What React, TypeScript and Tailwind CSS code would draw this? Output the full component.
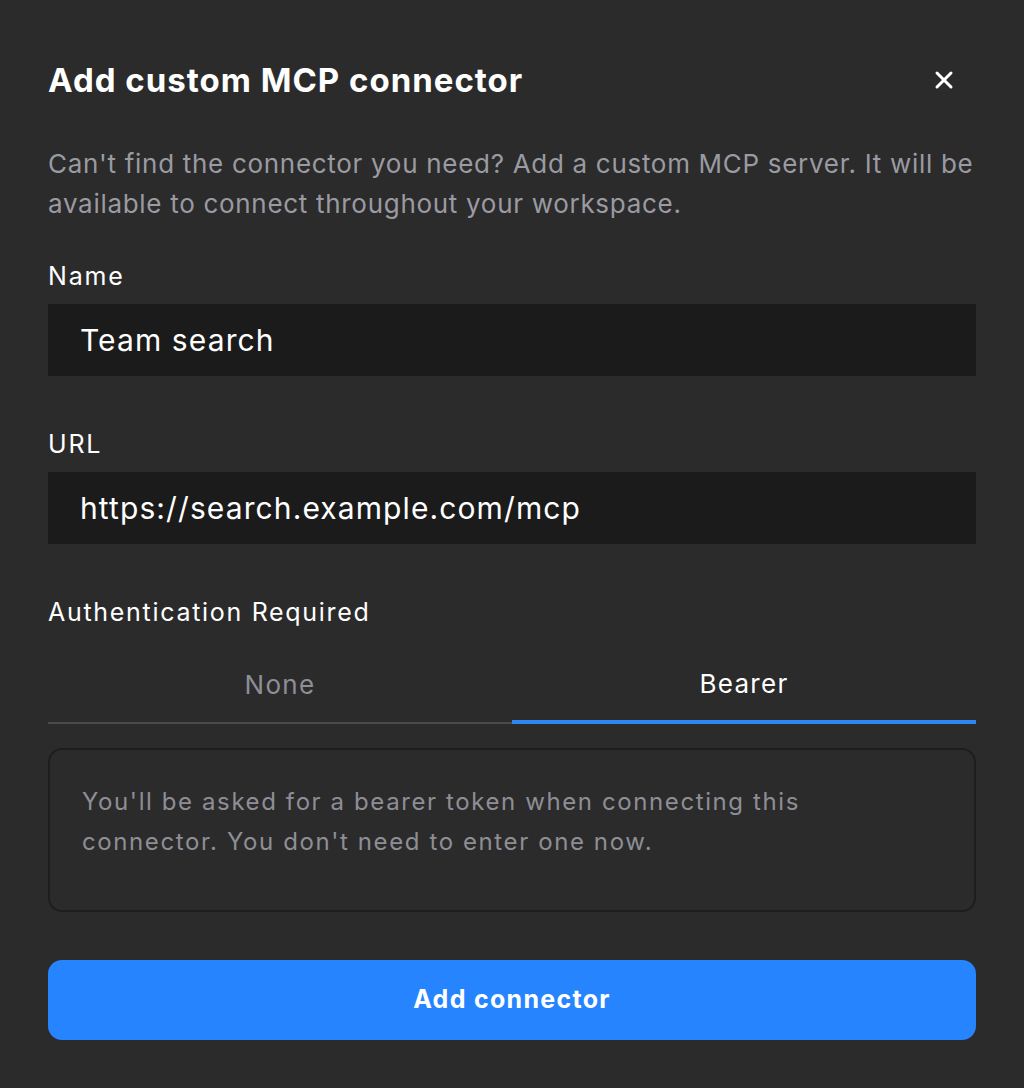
import React, { useState } from 'react';

type AuthMode = 'none' | 'bearer';

const CloseIcon = () => (
  <svg width="20" height="20" viewBox="0 0 20 20" fill="none">
    <path d="M3 3L17 17M17 3L3 17" stroke="white" strokeWidth="3" strokeLinecap="round" />
  </svg>
);

const Field = ({ label, value, first }: { label: string; value: string; first?: boolean }) => (
  <div className={first ? 'mt-[34px]' : 'mt-[50px]'}>
    <label className="block text-[25px] leading-[36px] text-white tracking-[1.8px]">{label}</label>
    <div className="mt-[10px] h-[72px] bg-[#1b1b1b] px-8 flex items-center text-[30px] text-white tracking-[1.1px]">
      {value}
    </div>
  </div>
);

export default function App() {
  const [auth, setAuth] = useState<AuthMode>('bearer');

  const tabClass = (active: boolean) =>
    `h-[58px] pb-[18px] text-[26px] leading-[36px] tracking-[1.3px] ${
      active ? 'text-white border-b-4 border-[#2f86f0]' : 'text-[#8e8e96] border-b-2 border-[#4a4a4a]'
    }`;

  return (
    <div
      className="w-[1024px] h-[1088px] bg-[#2b2b2b] px-12 pt-[56px]"
      style={{ fontFamily: 'Inter, "Noto Sans", sans-serif' }}
    >
      {/* header */}
      <div className="flex items-center justify-between">
        <h1 className="text-[33px] leading-[48px] font-bold text-white tracking-[1px]">
          Add custom MCP connector
        </h1>
        <button className="w-12 h-12 flex items-center justify-center mr-[8px]">
          <CloseIcon />
        </button>
      </div>

      <p className="mt-10 text-[26px] leading-[40px] text-[#9a9aa2] tracking-[0.7px]">
        Can't find the connector you need? Add a custom MCP server. It will be available to connect
        throughout your workspace.
      </p>

      <Field label="Name" value="Team search" first />
      <Field label="URL" value="https://search.example.com/mcp" />

      <div className="mt-[50px]">
        <div className="text-[25px] leading-[36px] text-white tracking-[1.7px]">Authentication Required</div>
        <div className="mt-[36px] grid grid-cols-2">
          <button onClick={() => setAuth('none')} className={tabClass(auth === 'none')}>
            None
          </button>
          <button onClick={() => setAuth('bearer')} className={tabClass(auth === 'bearer')}>
            Bearer
          </button>
        </div>
      </div>

      <div className="mt-6 h-[164px] rounded-[14px] border-2 border-[#1e1e1e] pl-8 pr-10 pt-8">
        <p className="text-[24px] leading-[40px] text-[#8e8e96] tracking-[1.6px]">
          You'll be asked for a bearer token when connecting this
          <br />
          connector. You don't need to enter one now.
        </p>
      </div>

      <button className="mt-12 w-full h-20 rounded-[14px] bg-[#2684ff] text-white text-[25px] font-bold tracking-[1.3px]">
        Add connector
      </button>
    </div>
  );
}
